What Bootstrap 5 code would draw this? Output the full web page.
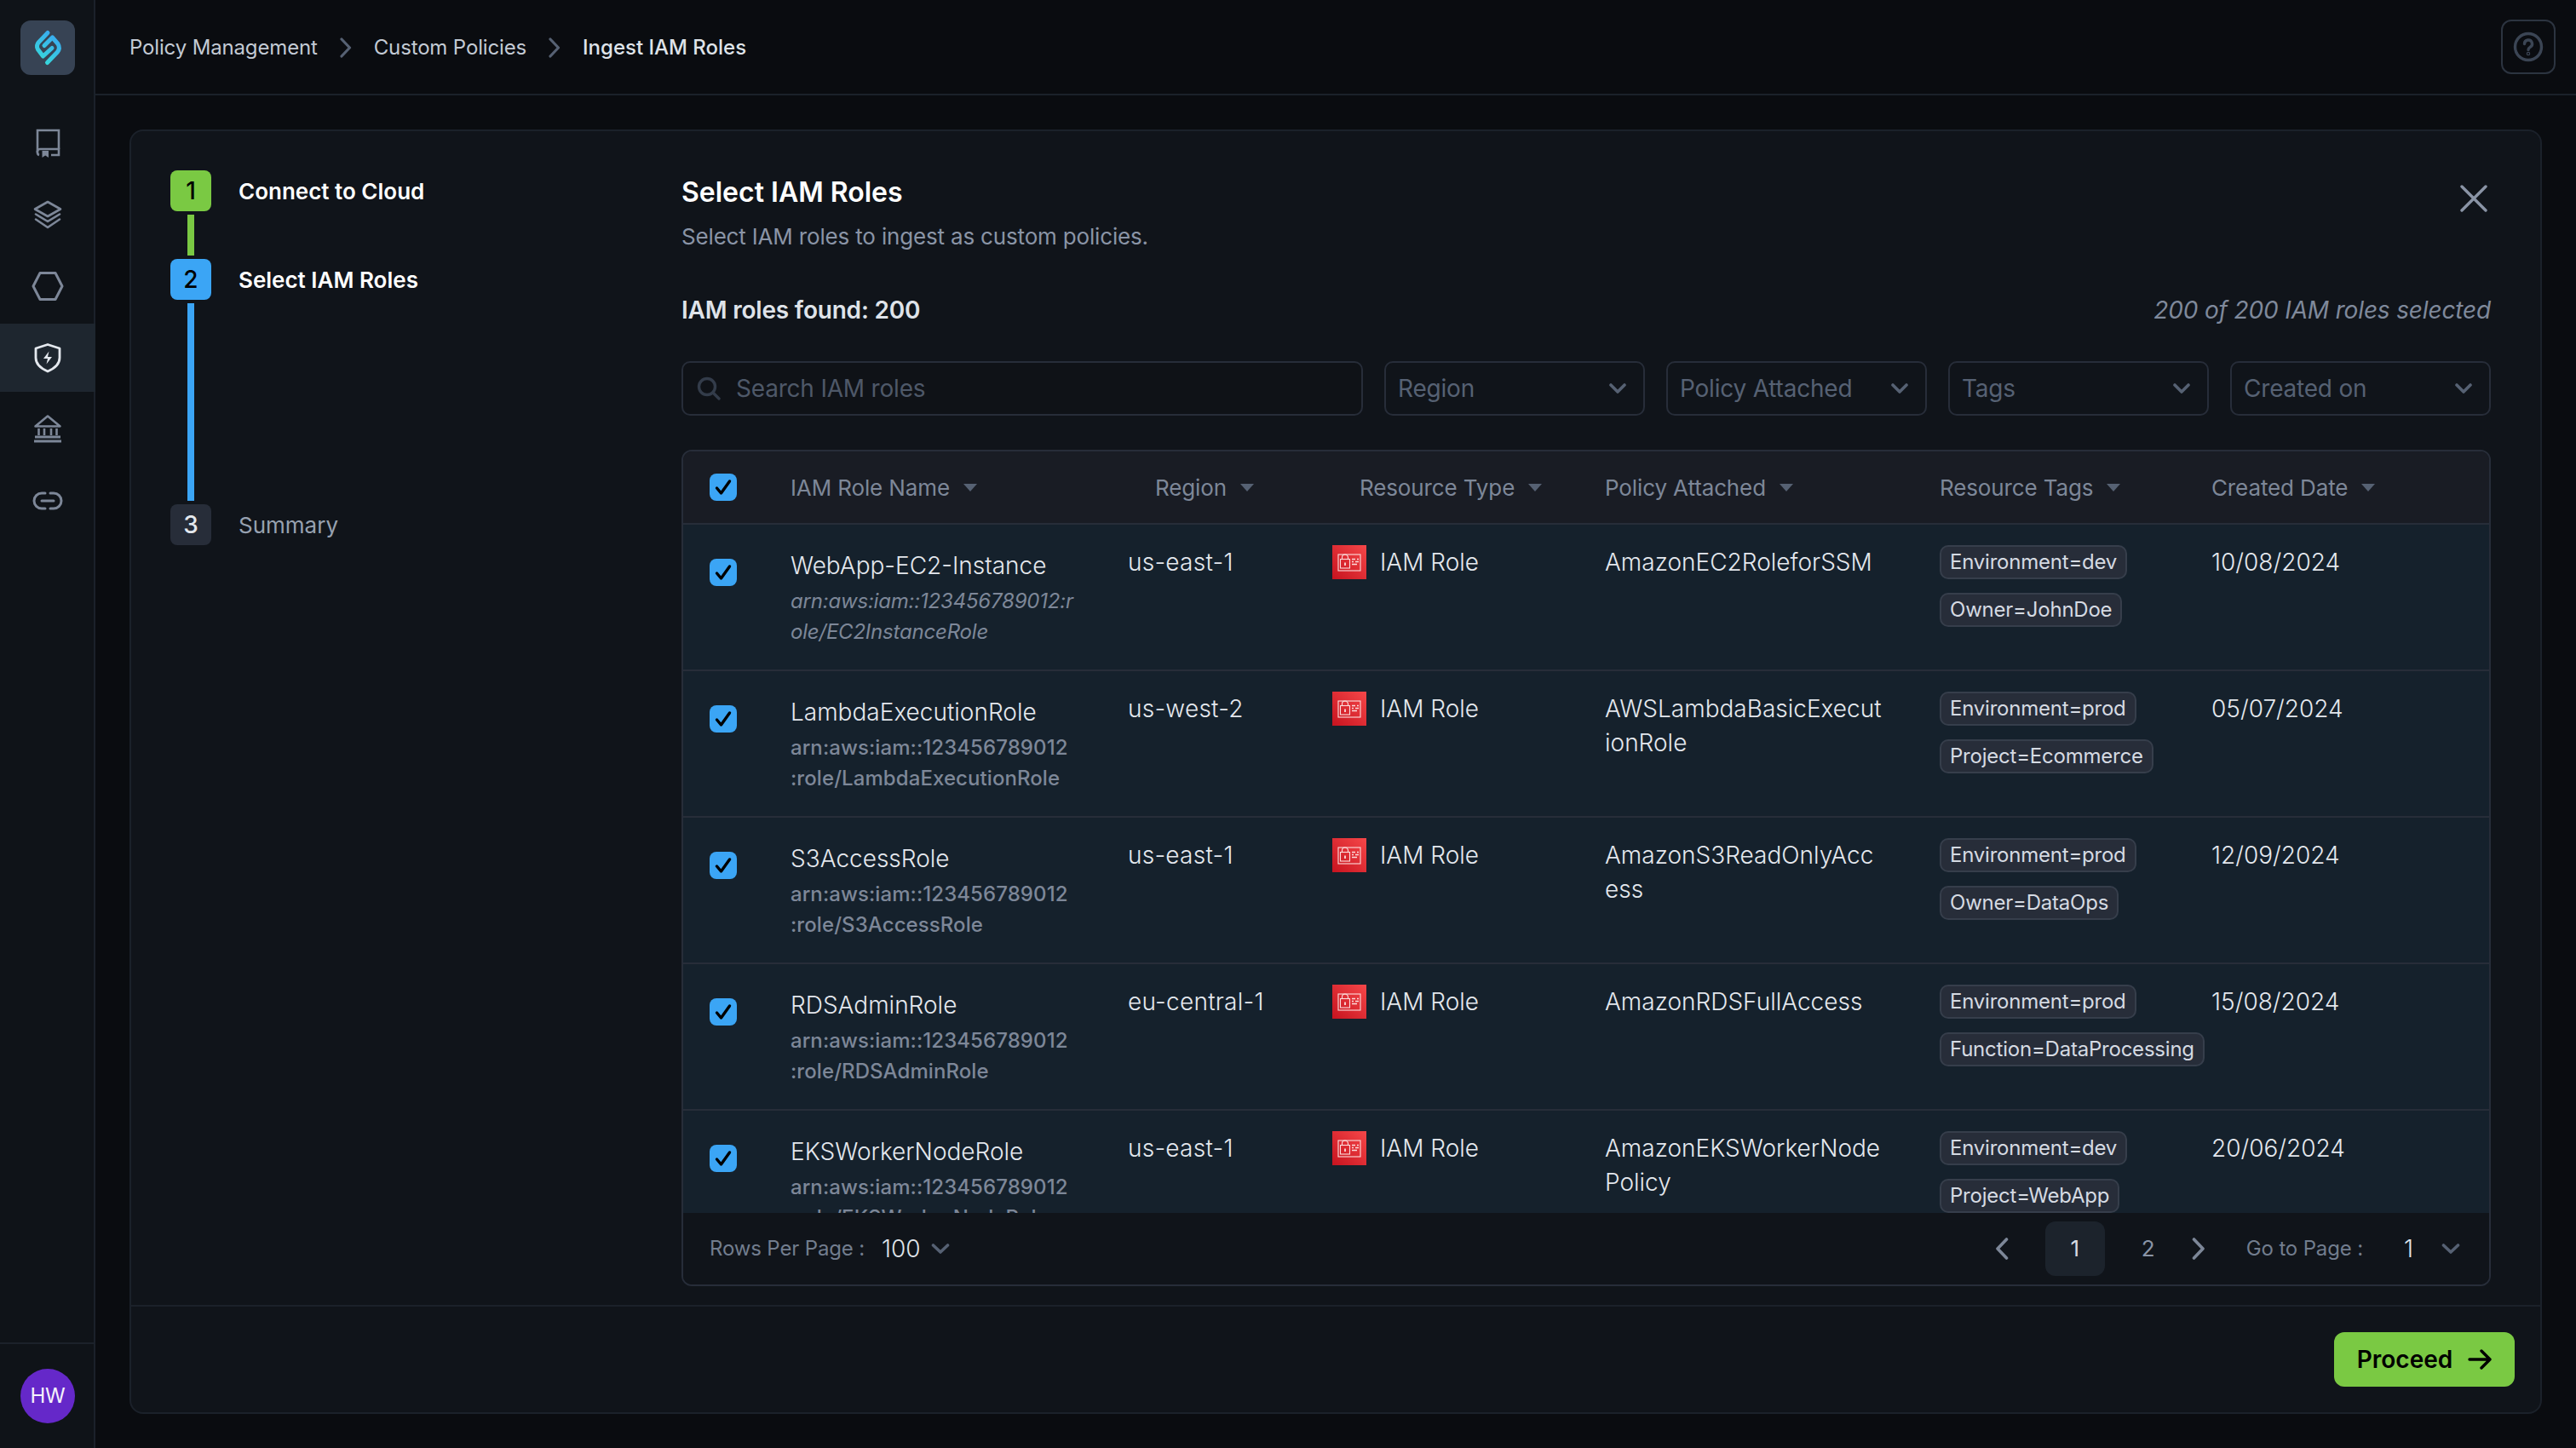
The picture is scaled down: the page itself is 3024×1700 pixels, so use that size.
<!doctype html>
<html lang="en"><head><meta charset="utf-8"><title>Ingest IAM Roles</title>
<link href="https://cdn.jsdelivr.net/npm/bootstrap@5.3.0/dist/css/bootstrap.min.css" rel="stylesheet">
<style>
html,body{height:100%}
body{font-family:Inter,"Liberation Sans",sans-serif;background:#0a0c10;color:#e4e8ee;font-size:28px;line-height:40px;overflow:hidden}
.shell{height:1700px}
.rail{width:112px;background:#0f1318;border-right:2px solid #1b212a;flex:none}
.logo-box{width:64px;height:64px;border-radius:12px;background:#374354;margin:24px}
.rail-items{margin-top:16px;gap:4px}
.rail-item{height:80px;width:112px}
.rail-item.on{background:#1e262f}
.rail-foot{margin-top:auto;border-top:2px solid #1b212a;height:124px;width:110px;padding-left:2px}
.avatar{width:64px;height:64px;border-radius:50%;background:#6528c9;color:#f4f1fb;font-size:24px;font-weight:400;letter-spacing:-.3px}
.topbar{height:112px;border-bottom:2px solid #1b212a;padding:2px 24px 0 40px;flex:none}
.crumb{font-size:24px;color:#c3cad4;font-weight:400;letter-spacing:-.15px}
.crumb-on{color:#dfe3e9;font-weight:500;letter-spacing:0}
.crumb-sep{margin:0 26px;display:block}
.help{width:64px;height:64px;border:2px solid #2c3440;border-radius:12px;margin-top:-2px}
.stage{padding:40px}
.panel{background:#10141a;border:2px solid #1b212a;border-radius:16px;height:1508px}
.panel-body{min-height:0}
.steps{width:646px;padding:46px 0 0 46px;flex:none}
.step-box{width:48px;height:48px;border-radius:8px;font-size:28px;font-weight:500;color:#000}
.s-g{background:#7ac943}.s-b{background:#3ba5f5}.s-d{background:#272d39;color:#e4e8ee}
.step-txt{margin-left:32px;padding-top:2px;font-size:26px;font-weight:600;color:#fff}
.step-txt.off{font-weight:400;color:#97a1b0}
.wire{width:8px;margin:4px 0 4px 20px}
.w1{height:48px;background:#7ac943}.w2{height:232px;background:#3ba5f5}
.work{width:2124px;padding-top:48px;flex:none}
.ttl{font-size:32px;line-height:48px;font-weight:600;color:#fff;margin:0}
.subt{font-size:26px;line-height:40px;color:#8a94a6;margin:8px 0 0;letter-spacing:-.17px}
.x-btn{margin:15px 4px 0 0;display:block;height:32px}
.found{margin-top:46px;height:40px}
.found-l{font-size:28px;font-weight:600;color:#dfe3e9;letter-spacing:-.2px}
.found-r{font-size:28px;font-style:italic;color:#7f899b;font-weight:400;letter-spacing:-.15px}
.filters{margin-top:40px;gap:25px;letter-spacing:-.2px}
.searchbox{width:800px;height:64px;border:2px solid #272d39;border-radius:10px;background:#0f1217;padding-left:16px;gap:18px;color:#4e5868}
.pick{width:306px;height:64px;border:2px solid #272d39;border-radius:10px;padding:0 20px 0 14px;color:#566173}
.grid-wrap{margin-top:40px;border:2px solid #272d39;border-radius:12px;overflow:hidden;flex:1 1 0;min-height:0;margin-bottom:22px}
.grid-scroll{flex:1 1 0;min-height:0;overflow:hidden}
table.roles{table-layout:fixed;width:2120px;margin:0;--bs-table-bg:transparent;--bs-table-color:#e4e8ee;color:#e4e8ee;border-collapse:separate;border-spacing:0}
.roles th{background:#191c24;height:86px;padding:2px 0 0;font-weight:400;font-size:26px;color:#7d8798;border-bottom:2px solid #272d39;vertical-align:middle;letter-spacing:-.12px}
.roles td{background:#15212c;height:172px;padding:24px 0 0;border-bottom:2px solid #272d39;vertical-align:top;font-weight:300;font-size:28px;line-height:40px}
.roles .ck{padding-left:31px}
.roles th.ck{padding-top:0}
.roles td.ck{padding-top:40px}
.roles th.pad-l{padding-left:32px}
.caret-d{display:inline-block;width:0;height:0;border-left:8px solid transparent;border-right:8px solid transparent;border-top:9px solid #566173;margin-left:16px;vertical-align:middle;position:relative;top:-2px}
.form-check-input.tick{width:32px;height:32px;margin:0;border-radius:8px;border:0;display:block;background-color:#3ba5f5;background-size:24px 24px;background-image:url("data:image/svg+xml,%3csvg xmlns='http://www.w3.org/2000/svg' viewBox='0 0 24 24'%3e%3cpath fill='none' stroke='%23000' stroke-width='3.4' stroke-linecap='round' stroke-linejoin='round' d='M4.5 13l5 6L19.5 5'/%3e%3c/svg%3e")}
.nm{margin-top:4px;width:332px}
.reg{letter-spacing:.25px}
.arn{width:332px;font-size:24px;line-height:36px;font-weight:500;color:#7d8798;overflow-wrap:anywhere;margin-top:4px;letter-spacing:.08px}
.arn.it{font-style:italic;font-weight:400;letter-spacing:-.2px}
.pol{width:328px;word-break:break-all}
.type{gap:16px}
.tagg{display:table;height:40px;line-height:36px;border:2px solid #363e4b;background:#272d39;border-radius:10px;padding:0 10px;font-size:24px;font-weight:400;color:#d5dae2;margin-bottom:16px;white-space:nowrap;letter-spacing:-.22px}
.pager{height:84px;background:#10141a;flex:none;padding:0 34px 0 31px;font-size:24px;color:#727d8e}
.pager-lab{letter-spacing:-.15px}
.pg-v{font-size:28px;color:#dfe3e9;font-weight:300}
.pg-100{margin:0 12px 0 20px}
.pg-1{margin:0 33px 0 48px}
.pg-back{margin-right:43px}
.pg-num{width:70px;height:64px;border-radius:12px;font-size:26px;color:#8a94a6}
.pg-num.on{background:#1c232c;color:#d5dae2}
.foot{height:126px;border-top:2px solid #1b212a;flex:none;padding:30px 30px 0 0}
.go{height:64px;width:212px;background:#7ac943;border:0;border-radius:12px;color:#000;font-size:28px;font-weight:600;gap:18px;padding:0}
.go:hover{background:#7ac943;color:#000}
</style></head><body>
<div class="shell d-flex">
<aside class="rail d-flex flex-column">
  <div class="logo-box d-flex align-items-center justify-content-center">
    <svg width="40" height="48" viewBox="36 32 40 48"><defs><linearGradient id="lg2" gradientUnits="userSpaceOnUse" x1="70" y1="36" x2="42" y2="76"><stop offset="0" stop-color="#39a2f5"/><stop offset="1" stop-color="#37e0d6"/></linearGradient></defs><g fill="none" stroke="url(#lg2)" stroke-width="5" stroke-linecap="round" stroke-linejoin="round"><path d="M56 38.500L45.500 49.500Q42 53.500 44.500 58L50.500 66L61 56.500"/><path d="M55.500 73.500L67.500 61Q71 56.500 68 51.500L61.500 44L52 53.500"/></g></svg>
  </div>
  <div class="rail-items d-flex flex-column">
    <div class="rail-item d-flex align-items-center justify-content-center"><svg width="40" height="40" viewBox="0 0 40 40" fill="none" stroke="#7d8798" stroke-width="2.600"><path d="M33 27V5H8V31a3 3 0 0 0 2 3"/><path d="M8 31a3 3 0 0 1 3-4H33V34H24"/><path d="M13.500 29H21V37L17.200 34.500L13.500 37Z" fill="#7d8798" stroke="none"/></svg></div>
    <div class="rail-item d-flex align-items-center justify-content-center"><svg width="40" height="40" viewBox="0 0 40 40" fill="none" stroke="#7d8798" stroke-width="2.600" stroke-linejoin="round" stroke-linecap="round"><path d="M20 5L35 13.500L20 22L5 13.500Z"/><path d="M6 19.500L20 28L34 19.500"/><path d="M6 25.500L20 35L34 25.500"/></svg></div>
    <div class="rail-item d-flex align-items-center justify-content-center"><svg width="40" height="40" viewBox="0 0 40 40" fill="none" stroke="#7d8798" stroke-width="3" stroke-linejoin="round"><path d="M11 4.500H29L37 20L29 35.500H11L3 20Z"/></svg></div>
    <div class="rail-item on d-flex align-items-center justify-content-center"><svg width="40" height="40" viewBox="0 0 40 40" fill="none" stroke="#e4e8ee" stroke-width="2.800" stroke-linejoin="round"><path d="M20 4.500L34 9V20C34 28 27 33 20 36C13 33 6 28 6 20V9Z"/><path d="M21.500 12.500L15 21H20L18.500 27.500L25 19H20Z" fill="#e4e8ee" stroke="none"/></svg></div>
    <div class="rail-item d-flex align-items-center justify-content-center"><svg width="40" height="40" viewBox="0 0 40 40" fill="none" stroke="#7d8798" stroke-width="2.600" stroke-linejoin="round"><path d="M20 4.500L34.500 16.500H5.500Z"/><path d="M9.500 19V27M16 19V27M24 19V27M30.500 19V27" /><path d="M5 29H35M4 34H36" stroke-width="3"/></svg></div>
    <div class="rail-item d-flex align-items-center justify-content-center"><svg width="40" height="40" viewBox="0 0 40 40" fill="none" stroke="#7d8798" stroke-width="3" stroke-linecap="round"><path d="M17 11H13a9 9 0 0 0 0 18H17"/><path d="M23 11H27a9 9 0 0 1 0 18H23"/><path d="M13 20H27"/></svg></div>
  </div>
  <div class="rail-foot d-flex align-items-center justify-content-center"><div class="avatar d-flex align-items-center justify-content-center">HW</div></div>
</aside>
<main class="flex-grow-1 d-flex flex-column">
  <div class="topbar d-flex align-items-center">
    <span class="crumb">Policy Management</span>
    <svg class="crumb-sep" width="14" height="24" viewBox="0 0 14 24" fill="none" stroke="#566173" stroke-width="3.200" stroke-linecap="round" stroke-linejoin="round"><path d="M2 2L11.500 12L2 22"/></svg>
    <span class="crumb">Custom Policies</span>
    <svg class="crumb-sep" width="14" height="24" viewBox="0 0 14 24" fill="none" stroke="#566173" stroke-width="3.200" stroke-linecap="round" stroke-linejoin="round"><path d="M2 2L11.500 12L2 22"/></svg>
    <span class="crumb crumb-on">Ingest IAM Roles</span>
    <div class="help ms-auto d-flex align-items-center justify-content-center"><svg width="36" height="36" viewBox="0 0 36 36" fill="none" stroke="#3b4554" stroke-width="3.400" stroke-linecap="round"><circle cx="18" cy="18" r="15.500"/><path d="M13.500 14.500a4.500 4.500 0 1 1 6.500 4c-1.500.8-2 1.500-2 3"/><circle cx="18" cy="26" r=".6"/></svg></div>
  </div>
  <div class="stage flex-grow-1">
    <div class="panel d-flex flex-column">
      <div class="panel-body d-flex flex-grow-1">
        <div class="steps">
          <div class="d-flex align-items-center"><div class="step-box s-g d-flex align-items-center justify-content-center">1</div><div class="step-txt">Connect to Cloud</div></div>
          <div class="wire w1"></div>
          <div class="d-flex align-items-center"><div class="step-box s-b d-flex align-items-center justify-content-center">2</div><div class="step-txt">Select IAM Roles</div></div>
          <div class="wire w2"></div>
          <div class="d-flex align-items-center"><div class="step-box s-d d-flex align-items-center justify-content-center">3</div><div class="step-txt off">Summary</div></div>
        </div>
        <div class="work d-flex flex-column">
          <div class="d-flex justify-content-between align-items-start">
            <div><h1 class="ttl">Select IAM Roles</h1><p class="subt">Select IAM roles to ingest as custom policies.</p></div>
            <svg class="x-btn" width="32" height="32" viewBox="0 0 32 32" fill="none" stroke="#8a94a6" stroke-width="3.400" stroke-linecap="round"><path d="M2 2L30 30M30 2L2 30"/></svg>
          </div>
          <div class="found d-flex justify-content-between align-items-center"><span class="found-l">IAM roles found: 200</span><span class="found-r">200 of 200 IAM roles selected</span></div>
          <div class="filters d-flex">
            <div class="searchbox d-flex align-items-center"><svg width="28" height="28" viewBox="0 0 28 28" fill="none" stroke="#333c4a" stroke-width="3.400" stroke-linecap="round"><circle cx="12" cy="12" r="9.500"/><path d="M19.500 19.500L26 26"/></svg><span>Search IAM roles</span></div>
            <div class="pick d-flex align-items-center justify-content-between"><span>Region</span><svg width="20" height="14" viewBox="0 0 20 14" fill="none" stroke="#566173" stroke-width="3.600" stroke-linecap="round" stroke-linejoin="round"><path d="M2 3L10 11L18 3"/></svg></div>
            <div class="pick d-flex align-items-center justify-content-between"><span>Policy Attached</span><svg width="20" height="14" viewBox="0 0 20 14" fill="none" stroke="#566173" stroke-width="3.600" stroke-linecap="round" stroke-linejoin="round"><path d="M2 3L10 11L18 3"/></svg></div>
            <div class="pick d-flex align-items-center justify-content-between"><span>Tags</span><svg width="20" height="14" viewBox="0 0 20 14" fill="none" stroke="#566173" stroke-width="3.600" stroke-linecap="round" stroke-linejoin="round"><path d="M2 3L10 11L18 3"/></svg></div>
            <div class="pick d-flex align-items-center justify-content-between"><span>Created on</span><svg width="20" height="14" viewBox="0 0 20 14" fill="none" stroke="#566173" stroke-width="3.600" stroke-linecap="round" stroke-linejoin="round"><path d="M2 3L10 11L18 3"/></svg></div>
          </div>
          <div class="grid-wrap d-flex flex-column">
            <div class="grid-scroll">
              <table class="table roles">
                <colgroup><col style="width:126px"><col style="width:396px"><col style="width:240px"><col style="width:320px"><col style="width:393px"><col style="width:319px"><col style="width:326px"></colgroup>
                <thead><tr>
                  <th class="ck"><input class="form-check-input tick" type="checkbox" checked aria-label="Select all"></th>
                  <th>IAM Role Name<span class="caret-d"></span></th>
                  <th class="pad-l">Region<span class="caret-d"></span></th>
                  <th class="pad-l">Resource Type<span class="caret-d"></span></th>
                  <th>Policy Attached<span class="caret-d"></span></th>
                  <th>Resource Tags<span class="caret-d"></span></th>
                  <th>Created Date<span class="caret-d"></span></th>
                </tr></thead>
                <tbody>
                <tr><td class="ck"><input class="form-check-input tick" type="checkbox" checked aria-label="Select"></td><td><div class="nm">WebApp-EC2-Instance</div><div class="arn it">arn:aws:iam::123456789012:role/EC2InstanceRole</div></td><td class="reg">us-east-1</td><td><div class="type d-flex"><svg width="40" height="40" viewBox="0 0 40 40"><use href="#iam"/></svg>IAM Role</div></td><td><div class="pol">AmazonEC2RoleforSSM</div></td><td><span class="tagg">Environment=dev</span><span class="tagg">Owner=JohnDoe</span></td><td>10/08/2024</td></tr>
                <tr><td class="ck"><input class="form-check-input tick" type="checkbox" checked aria-label="Select"></td><td><div class="nm">LambdaExecutionRole</div><div class="arn">arn:aws:iam::123456789012:role/LambdaExecutionRole</div></td><td class="reg">us-west-2</td><td><div class="type d-flex"><svg width="40" height="40" viewBox="0 0 40 40"><use href="#iam"/></svg>IAM Role</div></td><td><div class="pol">AWSLambdaBasicExecutionRole</div></td><td><span class="tagg">Environment=prod</span><span class="tagg">Project=Ecommerce</span></td><td>05/07/2024</td></tr>
                <tr><td class="ck"><input class="form-check-input tick" type="checkbox" checked aria-label="Select"></td><td><div class="nm">S3AccessRole</div><div class="arn">arn:aws:iam::123456789012:role/S3AccessRole</div></td><td class="reg">us-east-1</td><td><div class="type d-flex"><svg width="40" height="40" viewBox="0 0 40 40"><use href="#iam"/></svg>IAM Role</div></td><td><div class="pol">AmazonS3ReadOnlyAccess</div></td><td><span class="tagg">Environment=prod</span><span class="tagg">Owner=DataOps</span></td><td>12/09/2024</td></tr>
                <tr><td class="ck"><input class="form-check-input tick" type="checkbox" checked aria-label="Select"></td><td><div class="nm">RDSAdminRole</div><div class="arn">arn:aws:iam::123456789012:role/RDSAdminRole</div></td><td class="reg">eu-central-1</td><td><div class="type d-flex"><svg width="40" height="40" viewBox="0 0 40 40"><use href="#iam"/></svg>IAM Role</div></td><td><div class="pol">AmazonRDSFullAccess</div></td><td><span class="tagg">Environment=prod</span><span class="tagg">Function=DataProcessing</span></td><td>15/08/2024</td></tr>
                <tr><td class="ck"><input class="form-check-input tick" type="checkbox" checked aria-label="Select"></td><td><div class="nm">EKSWorkerNodeRole</div><div class="arn">arn:aws:iam::123456789012:role/EKSWorkerNodeRole</div></td><td class="reg">us-east-1</td><td><div class="type d-flex"><svg width="40" height="40" viewBox="0 0 40 40"><use href="#iam"/></svg>IAM Role</div></td><td><div class="pol">AmazonEKSWorkerNodePolicy</div></td><td><span class="tagg">Environment=dev</span><span class="tagg">Project=WebApp</span></td><td>20/06/2024</td></tr>
                </tbody>
              </table>
            </div>
            <div class="pager d-flex align-items-center">
              <span class="pager-lab">Rows Per Page :</span><span class="pg-v pg-100">100</span>
              <svg width="22" height="14" viewBox="0 0 22 14" fill="none" stroke="#566173" stroke-width="3.600" stroke-linecap="round" stroke-linejoin="round"><path d="M2.500 3L11 11L19.500 3"/></svg>
              <div class="ms-auto d-flex align-items-center">
                <svg class="pg-back" width="16" height="26" viewBox="0 0 16 26" fill="none" stroke="#7d8798" stroke-width="3.600" stroke-linecap="round" stroke-linejoin="round"><path d="M13.500 2L3 13L13.500 24"/></svg>
                <div class="pg-num on d-flex align-items-center justify-content-center">1</div>
                <div class="pg-num d-flex align-items-center justify-content-center ms-3">2</div>
                <svg class="ms-3" width="16" height="26" viewBox="0 0 16 26" fill="none" stroke="#7d8798" stroke-width="3.600" stroke-linecap="round" stroke-linejoin="round"><path d="M2.500 2L13 13L2.500 24"/></svg>
                <span class="ms-5 pager-lab">Go to Page :</span><span class="pg-v pg-1">1</span>
                <svg width="22" height="14" viewBox="0 0 22 14" fill="none" stroke="#566173" stroke-width="3.600" stroke-linecap="round" stroke-linejoin="round"><path d="M2.500 3L11 11L19.500 3"/></svg>
              </div>
            </div>
          </div>
        </div>
      </div>
      <div class="foot d-flex justify-content-end"><button class="btn go d-flex align-items-center justify-content-center" type="button">Proceed<svg width="28" height="24" viewBox="0 0 28 24" fill="none" stroke="#000" stroke-width="3.400" stroke-linecap="round" stroke-linejoin="round"><path d="M2 12H26M16 2L26 12L16 22"/></svg></button></div>
    </div>
  </div>
</main>
</div>
<svg width="0" height="0" class="position-absolute"><defs>
<linearGradient id="rg" x1="0" y1="1" x2="1" y2="0"><stop offset="0" stop-color="#c7131f"/><stop offset="1" stop-color="#f54749"/></linearGradient>
<symbol id="iam" viewBox="0 0 40 40"><rect width="40" height="40" fill="url(#rg)"/><g fill="none" stroke="#fbdcdc" stroke-width="1.100"><rect x="7" y="11" width="26" height="19"/><rect x="9.500" y="16.500" width="11" height="10.500"/><path d="M11.500 16.500V14.500a3.500 3.500 0 0 1 7 0V16.500"/><path d="M15 20.500V24M15 20.500" stroke-width="1.800"/><path d="M23 16.500H27M29 16.500H31M23 19.500H25M27 19.500H31M23 22.500H29" stroke-width="1.300"/></g></symbol>
</defs></svg>
<script src="https://cdn.jsdelivr.net/npm/bootstrap@5.3.0/dist/js/bootstrap.bundle.min.js"></script>
</body></html>
